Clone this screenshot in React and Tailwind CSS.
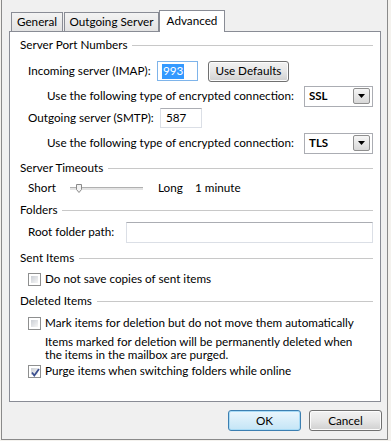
import React from 'react';

const tabBase = 'flex items-center justify-center border border-b-0 border-[#898c95] text-black whitespace-nowrap';

function Group({ title }) {
  return (
    <div className="flex items-center h-full">
      <span className="whitespace-nowrap">{title}</span>
      <div className="flex-1 ml-[5px] h-px bg-[#c8c8c8]" />
    </div>
  );
}

function Select({ value }) {
  return (
    <div className="ml-auto w-[69px] h-[21px] border border-[#abadb3] bg-white flex items-center pl-[4px] pr-[2px]">
      <span className="flex-1 font-bold text-[11.5px] leading-none">{value}</span>
      <div className="w-[17px] h-[16px] rounded-[2px] border border-[#8f8f8f] bg-gradient-to-b from-[#f6f6f6] to-[#d8d8d8] flex items-center justify-center">
        <svg width="7" height="4" viewBox="0 0 7 4"><path d="M0 0h7L3.5 4z" fill="#000" /></svg>
      </div>
    </div>
  );
}

function Checkbox({ checked }) {
  return (
    <div className="w-[13px] h-[13px] border border-[#8e8f8f] bg-white p-[2px] shrink-0 relative">
      <div className="w-full h-full bg-gradient-to-br from-[#cbcfd5] to-[#f6f6f6]" />
      {checked && (
        <svg className="absolute left-[1px] top-[1px]" width="11" height="11" viewBox="0 0 11 11">
          <path d="M2 5.5 L4.3 8.5 L9 2" fill="none" stroke="#3b4f8f" strokeWidth="1.8" />
        </svg>
      )}
    </div>
  );
}

function Button({ children, primary, className = '' }) {
  return (
    <div
      className={`h-[21px] rounded-[3px] border flex items-center justify-center whitespace-nowrap ${
        primary
          ? 'border-[#3c7fb1] bg-gradient-to-b from-[#eaf6fd] to-[#c4e5f6] shadow-[inset_0_0_0_1px_#a8dbf6]'
          : 'border-[#707070] bg-gradient-to-b from-[#f2f2f2] via-[#e6e6e6] to-[#d0d0d0] shadow-[inset_0_0_0_1px_#fcfcfc]'
      } ${className}`}
    >
      {children}
    </div>
  );
}

export default function App() {
  return (
    <div className="w-[391px] h-[441px] bg-[#f4f2ee] font-['Lato',sans-serif] text-[11.7px] text-black leading-none whitespace-nowrap">
      <div className="ml-[1px] w-[387px] h-[440px] border-l border-r border-b border-[#8a8a8a] bg-[#f0f0f0]">
        {/* Tabs */}
        <div className="pt-[10px] ml-[9px] flex items-end">
          <div className={`${tabBase} w-[52px] h-[19px] bg-gradient-to-b from-[#f3f3f3] to-[#e3e3e3]`}>General</div>
          <div className={`${tabBase} w-[95px] h-[19px] ml-px bg-gradient-to-b from-[#f3f3f3] to-[#e3e3e3]`}>Outgoing Server</div>
          <div className={`${tabBase} w-[66px] h-[22px] -mb-px bg-white relative z-10 pb-[2px]`}>Advanced</div>
        </div>

        {/* Panel */}
        <div className="ml-[7px] w-[372px] h-[371px] border border-[#898c95] bg-white pl-[10px] pr-[7px] flex flex-col">
          <div className="h-[26px] shrink-0"><Group title="Server Port Numbers" /></div>

          <div className="h-[26px] shrink-0 flex items-center pl-[8px]">
            <span className="w-[129px]">Incoming server (IMAP):</span>
            <div className="w-[41px] h-[20px] border border-[#7eb4ea] bg-white flex items-center pl-[4px]">
              <span className="bg-[#3399ff] text-white px-px h-[15px] flex items-center">993</span>
            </div>
            <Button className="ml-[10px] w-[81px]">Use Defaults</Button>
          </div>

          <div className="h-[24px] shrink-0 flex items-center pl-[27px]">
            <span>Use the following type of encrypted connection:</span>
            <Select value="SSL" />
          </div>

          <div className="h-[20px] shrink-0 flex items-center pl-[8px]">
            <span className="w-[132px]">Outgoing server (SMTP):</span>
            <div className="w-[42px] h-[20px] border border-[#dbdfe6] border-t-[#abadb3] bg-white flex items-center pl-[5px]">587</div>
          </div>

          <div className="h-[30px] shrink-0 flex items-center pl-[27px]">
            <span>Use the following type of encrypted connection:</span>
            <Select value="TLS" />
          </div>

          <div className="h-[20px] shrink-0"><Group title="Server Timeouts" /></div>

          <div className="h-[20px] shrink-0 flex items-center pl-[8px]">
            <span className="w-[42px]">Short</span>
            <div className="relative w-[73px] h-[8px] flex items-center">
              <div className="w-full h-[3px] border-t border-[#b0b0b0] bg-[#e4e4e4]" />
              <svg className="absolute left-[6px] top-0" width="6" height="9" viewBox="0 0 6 9">
                <path d="M0.5 0.5h5v5l-2.5 3l-2.5-3z" fill="#f2f2f2" stroke="#8a8a8a" />
              </svg>
            </div>
            <span className="ml-[15px] w-[37px]">Long</span>
            <span>1 minute</span>
          </div>

          <div className="h-[24px] shrink-0"><Group title="Folders" /></div>

          <div className="h-[20px] shrink-0 flex items-center pl-[8px]">
            <span className="w-[98px]">Root folder path:</span>
            <div className="flex-1 h-[21px] border border-[#dbdfe6] border-t-[#abadb3] bg-white" />
          </div>

          <div className="h-[32px] shrink-0"><Group title="Sent Items" /></div>

          <div className="h-[10px] shrink-0 flex items-center pl-[8px] gap-[4px]">
            <Checkbox />
            <span>Do not save copies of sent items</span>
          </div>

          <div className="h-[34px] shrink-0"><Group title="Deleted Items" /></div>

          <div className="h-[10px] shrink-0 flex items-center pl-[8px] gap-[4px]">
            <Checkbox />
            <span>Mark items for deletion but do not move them automatically</span>
          </div>

          <div className="h-[34px] shrink-0 pt-[7px] pl-[25px] leading-[13px]">
            <div>Items marked for deletion will be permanently deleted when</div>
            <div>the items in the mailbox are purged.</div>
          </div>

          <div className="h-[18px] shrink-0 flex items-center pl-[8px] gap-[4px]">
            <Checkbox checked />
            <span>Purge items when switching folders while online</span>
          </div>
        </div>

        {/* Buttons */}
        <div className="mt-[8px] pr-[5px] flex justify-end gap-[8px]">
          <Button primary className="w-[73px]">OK</Button>
          <Button className="w-[73px]">Cancel</Button>
        </div>
      </div>
    </div>
  );
}
